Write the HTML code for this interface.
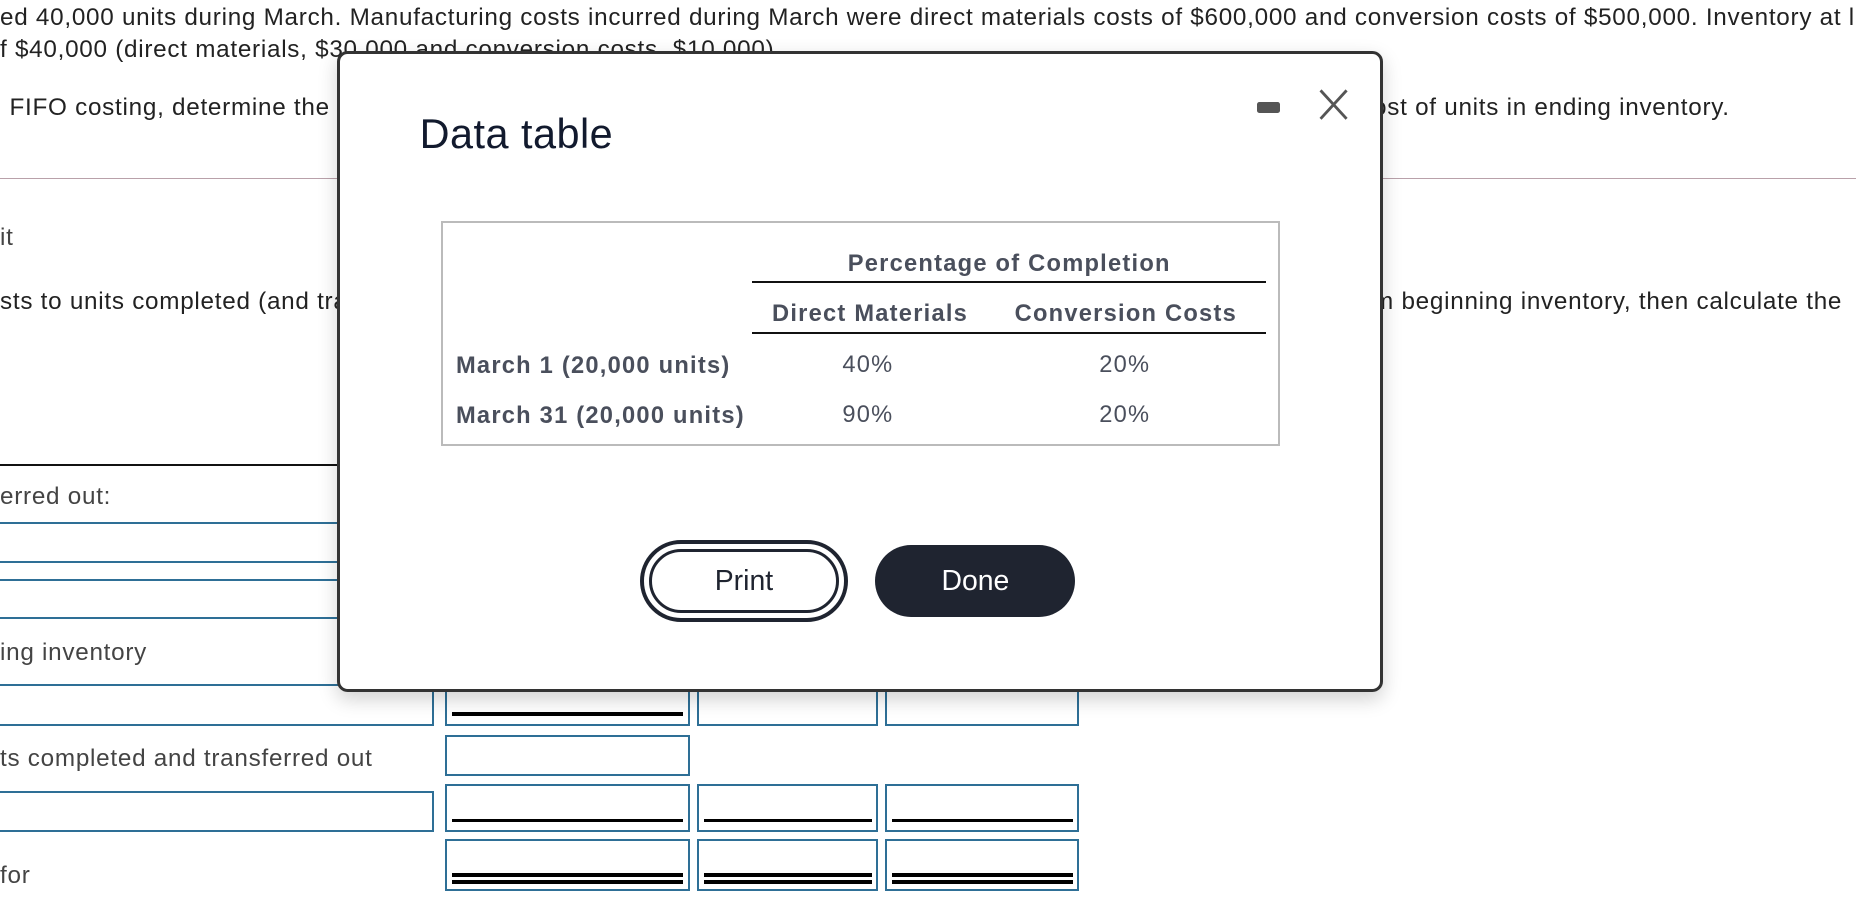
<!DOCTYPE html>
<html><head><meta charset="utf-8"><style>
html,body{margin:0;padding:0;background:#fff;overflow:hidden;width:1856px;height:898px}
#w{position:relative;width:1568px;height:759px;zoom:1.18367;font-family:"Liberation Sans",Arial,sans-serif;color:#222}
.t{position:absolute;font-size:20.5px;letter-spacing:0.62px;white-space:nowrap;line-height:24px}
.g{color:#444}
.ln{position:absolute;height:2px;background:#2e6f96}
.box{position:absolute;border:2px solid #2e6f96;box-sizing:border-box}
.ul{position:absolute;left:4px;right:4px;height:3px;background:#000}
#m{position:absolute;left:285px;top:43px;width:883px;height:542px;border:3px solid #333;border-radius:9px;background:#fff;box-sizing:border-box;box-shadow:0 6px 16px rgba(0,0,0,.18)}
.tb{position:absolute;font-size:20px;letter-spacing:1.05px;font-weight:bold;color:#4a4f5c;white-space:nowrap}
.tn{position:absolute;font-size:20px;letter-spacing:1px;color:#4a4f5c;white-space:nowrap;text-align:center;width:100px}
</style></head><body><div id="w">
<div class="t" style="left:0;top:3px">ed 40,000 units during March. Manufacturing costs incurred during March were direct materials costs of $600,000 and conversion costs of $500,000. Inventory at l</div>
<div class="t" style="left:0;top:30px">f $40,000 (direct materials, $30,000 and conversion costs, $10,000).</div>
<div class="t" style="left:8px;top:79px">FIFO costing, determine the</div>
<div class="t" style="left:1160px;top:79px">ost of units in ending inventory.</div>
<div style="position:absolute;left:0;right:0;top:150px;height:1px;background:#b9a1aa"></div>
<div class="t g" style="left:0;top:189px">it</div>
<div class="t" style="left:0;top:243px">sts to units completed (and tra</div>
<div class="t" style="left:1160px;top:243px">m beginning inventory, then calculate the</div>
<div style="position:absolute;left:0;width:290px;top:392px;height:2px;background:#111"></div>
<div class="t g" style="left:0;top:408px">erred out:</div>
<div class="ln" style="left:0;width:290px;top:441px"></div>
<div class="ln" style="left:0;width:290px;top:474px"></div>
<div class="ln" style="left:0;width:290px;top:489px"></div>
<div class="ln" style="left:0;width:290px;top:521px"></div>
<div class="t g" style="left:0;top:540px">ing inventory</div>
<div class="box" style="left:-3px;width:370px;top:578px;height:35px"></div>
<div class="box" style="left:376px;width:207px;top:578px;height:35px"><div class="ul" style="top:22px"></div></div>
<div class="box" style="left:589px;width:153px;top:578px;height:35px"></div>
<div class="box" style="left:748px;width:164px;top:578px;height:35px"></div>
<div class="t g" style="left:0;top:629px">ts completed and transferred out</div>
<div class="box" style="left:376px;width:207px;top:621px;height:35px"></div>
<div class="box" style="left:-3px;width:370px;top:668px;height:35px"></div>
<div class="box" style="left:376px;width:207px;top:662px;height:41px"><div class="ul" style="top:28px"></div></div>
<div class="box" style="left:589px;width:153px;top:662px;height:41px"><div class="ul" style="top:28px"></div></div>
<div class="box" style="left:748px;width:164px;top:662px;height:41px"><div class="ul" style="top:28px"></div></div>
<div class="t g" style="left:0;top:728px">for</div>
<div class="box" style="left:376px;width:207px;top:709px;height:44px"><div class="ul" style="top:27px"></div><div class="ul" style="top:33px"></div></div>
<div class="box" style="left:589px;width:153px;top:709px;height:44px"><div class="ul" style="top:27px"></div><div class="ul" style="top:33px"></div></div>
<div class="box" style="left:748px;width:164px;top:709px;height:44px"><div class="ul" style="top:27px"></div><div class="ul" style="top:33px"></div></div>

<div id="m">
<div style="position:absolute;left:67px;top:48px;font-size:35px;color:#121a2e;letter-spacing:0.4px">Data table</div>
<div style="position:absolute;left:774px;top:41px;width:20px;height:9px;border-radius:2px;background:#555"></div>
<svg style="position:absolute;left:825px;top:29px" width="28" height="28" viewBox="0 0 28 28"><path d="M3 2L25 26M25 2L3 26" stroke="#555" stroke-width="2.4" fill="none"/></svg>
<div style="position:absolute;left:85px;top:141px;width:709px;height:190px;border:2px solid #bbb;box-sizing:border-box">
<div class="tb" style="left:342px;top:24px">Percentage of Completion</div>
<div style="position:absolute;left:261px;width:434px;top:49px;height:2px;background:#111"></div>
<div class="tb" style="left:278px;top:66px">Direct Materials</div>
<div class="tb" style="left:483px;top:66px">Conversion Costs</div>
<div style="position:absolute;left:261px;width:434px;top:92px;height:2px;background:#111"></div>
<div class="tb" style="left:11px;top:110px">March 1 (20,000 units)</div>
<div class="tn" style="left:309px;top:109px">40%</div>
<div class="tn" style="left:526px;top:109px">20%</div>
<div class="tb" style="left:11px;top:152px">March 31 (20,000 units)</div>
<div class="tn" style="left:309px;top:151px">90%</div>
<div class="tn" style="left:526px;top:151px">20%</div>
</div>
<div style="position:absolute;left:253px;top:411px;width:176px;height:69px;border:4px solid #1f2430;border-radius:36px;box-sizing:border-box">
<div style="position:absolute;left:4px;top:4px;right:4px;bottom:4px;border:3px solid #1f2430;border-radius:30px;box-sizing:border-box;text-align:center;line-height:50px;font-size:24px;color:#1f2430">Print</div></div>
<div style="position:absolute;left:452px;top:415px;width:169px;height:61px;border-radius:31px;background:#1f2430;color:#fff;text-align:center;line-height:61px;font-size:24px">Done</div>
</div>
</div></body></html>
